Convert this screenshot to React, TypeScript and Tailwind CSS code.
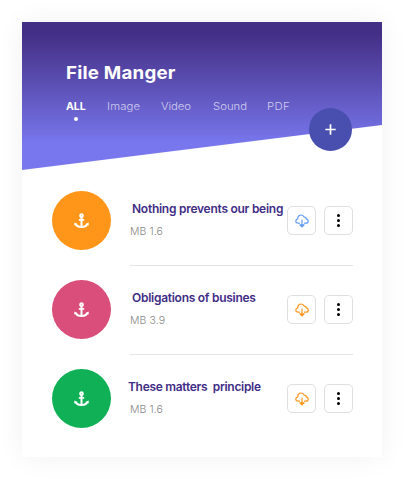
const tabs = [
  { label: "Image", box: "w-[54px]", spacing: "tracking-[0.15px]" },
  { label: "Video", box: "w-[52px]", spacing: "tracking-[-0.1px]" },
  { label: "Sound", box: "w-[54px]", spacing: "tracking-[0px]" },
  { label: "PDF", box: "w-[26px]", spacing: "tracking-[0.3px]" },
];

const files = [
  {
    title: "Nothing prevents our being",
    size: "MB 1.6",
    disc: "bg-[#ff9619]",
    cloud: "text-[#5f9bf5]",
    indent: "ml-[2px]",
    spacing: "tracking-[-0.26px]",
  },
  {
    title: "Obligations of busines",
    size: "MB 3.9",
    disc: "bg-[#d94e7a]",
    cloud: "text-[#ff9619]",
    indent: "ml-[2px]",
    spacing: "tracking-[-0.27px]",
  },
  {
    title: "These matters  principle",
    size: "MB 1.6",
    disc: "bg-[#10b156]",
    cloud: "text-[#ff9619]",
    indent: "ml-[-2px]",
    spacing: "tracking-[-0.3px]",
  },
];

function Anchor() {
  return (
    <svg width="15" height="15" viewBox="0 0 15 15" fill="none" stroke="currentColor">
      <circle cx="7.500" cy="2.700" r="1.400" strokeWidth="1.900" />
      <path d="M7.500 4v9.500" strokeWidth="2" />
      <path d="M4.800 6.900h5.400" strokeWidth="1.700" />
      <path d="M1.600 10.700c.5 1.900 2.900 3.200 5.900 3.200s5.400-1.300 5.900-3.200" strokeWidth="2" />
      <path d="M.3 12.400V9.400l3.600 1.900zM14.700 12.400V9.400l-3.600 1.900z" fill="currentColor" stroke="none" />
    </svg>
  );
}

function CloudDownload() {
  return (
    <svg width="14" height="14" viewBox="0 0 14 14" fill="none" stroke="currentColor" strokeWidth="1.2" strokeLinecap="round" strokeLinejoin="round">
      <path d="M4.500 9.200H3.200C1.700 9.200.8 8.200.8 7c0-1.100.7-1.900 1.900-2.100C2.700 2.500 4.200 1 6.100 1c1.500 0 2.600.8 3 2.100 1.200-.2 2.100.6 2.100 1.700 1.200.1 2 .9 2 2.100s-.9 2.300-2.300 2.300H9.500" />
      <path d="M7 6v6.500M4.900 10.800 7 12.900l2.100-2.100z" />
    </svg>
  );
}

function Dots() {
  return (
    <div className="flex flex-col gap-[2px]">
      <span className="size-[3px] rounded-full bg-black" />
      <span className="size-[3px] rounded-full bg-black" />
      <span className="size-[3px] rounded-full bg-black" />
    </div>
  );
}

const buttonStyle =
  "flex size-[29px] shrink-0 items-center justify-center rounded-[5px] border border-[#dfdfe3] bg-white";

export default function App() {
  return (
    <div className="h-[479px] w-[404px] overflow-hidden bg-white p-[22px] font-['Inter','Liberation_Sans',sans-serif]">
      <main className="h-[435px] w-[360px] bg-white shadow-[0_0_28px_rgba(0,0,0,0.06)]">
        <div className="relative h-[148px]">
          <header className="h-[148px] bg-linear-to-b from-[#442f86] from-8% to-[#7877ed] to-82% pt-[38px] pl-[44px] text-white [clip-path:polygon(0_0,100%_0,100%_103px,0_100%)]">
            <h1 className="w-max origin-left scale-x-[1.07] text-[17.5px] leading-[26px] font-bold tracking-[0.2px] whitespace-nowrap">File Manger</h1>
            <nav className="mt-[13px] flex text-[10.5px] leading-[16px]">
              <div className="flex w-[41px] flex-col items-start font-bold">
                <span>ALL</span>
                <span className="mt-[2px] ml-[8px] size-[4px] rounded-full bg-white" />
              </div>
              {tabs.map((tab) => (
                <span key={tab.label} className={`${tab.box} ${tab.spacing} origin-left scale-x-[1.08] font-light text-white/70`}>
                  {tab.label}
                </span>
              ))}
            </nav>
          </header>
          <button className="absolute top-[85.5px] left-[287px] flex size-[43px] items-center justify-center rounded-full bg-[#494fae]">
            <svg width="11" height="11" viewBox="0 0 11 11" stroke="white" strokeWidth="1.700">
              <path d="M5.500 .3v10.400M.3 5.500h10.400" />
            </svg>
          </button>
        </div>
        <ul className="pt-[21px] pl-[30px]">
          {files.map((file, i) => (
            <li key={file.title} className="flex h-[89px]">
              <div className={`flex size-[59px] items-center justify-center rounded-full text-white ${file.disc}`}>
                <Anchor />
              </div>
              <div className={`ml-[19px] flex h-[75px] w-[223px] border-b ${i < 2 ? "border-[#e4e4e7]" : "border-transparent"}`}>
                <div className="w-[157px] shrink-0 whitespace-pre">
                  <h2 className={`mt-[9px] text-[12px] leading-[18px] font-semibold text-[#3f2d86] ${file.indent} ${file.spacing}`}>
                    {file.title}
                  </h2>
                  <p className="mt-[6px] text-[10.5px] leading-[16px] font-light tracking-[0.1px] text-[#888888]">{file.size}</p>
                </div>
                <div className="mt-[15px] flex gap-[8px]">
                  <button className={`${buttonStyle} ${file.cloud}`}>
                    <CloudDownload />
                  </button>
                  <button className={buttonStyle}>
                    <Dots />
                  </button>
                </div>
              </div>
            </li>
          ))}
        </ul>
      </main>
    </div>
  );
}
